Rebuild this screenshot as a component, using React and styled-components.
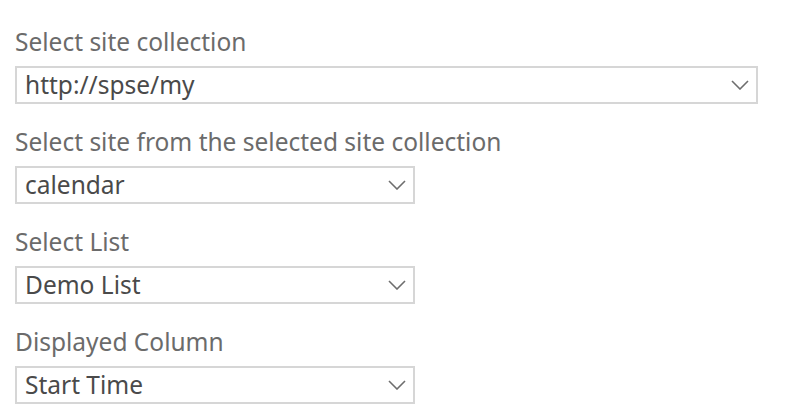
import React from 'react';
import styled, { createGlobalStyle } from 'styled-components';

const GlobalStyle = createGlobalStyle`
  html, body {
    margin: 0;
    padding: 0;
    background: #ffffff;
  }
  body {
    font-family: "Noto Sans", "Open Sans", "DejaVu Sans", sans-serif;
  }
`;

const Form = styled.div`
  display: flex;
  flex-direction: column;
  gap: 24px;
  padding: 28px 0 0 15px;
`;

const Field = styled.div`
  display: flex;
  flex-direction: column;
  gap: 10px;
`;

const Label = styled.label`
  height: 28px;
  line-height: 28px;
  font-size: 24.5px;
  color: #6b6b6b;
  white-space: nowrap;
`;

const SelectBox = styled.div`
  box-sizing: border-box;
  width: ${props => props.$width}px;
  height: 38px;
  border: 2px solid #d6d6d6;
  display: flex;
  align-items: center;
  justify-content: space-between;
  padding: 0 7px 0 8px;
  cursor: pointer;
`;

const Value = styled.span`
  font-size: 24.5px;
  line-height: 28px;
  color: #4a4a4a;
  white-space: nowrap;
`;

const Chevron = () => (
  <svg width="18" height="10" viewBox="0 0 18 10">
    <polyline
      points="1,1 9,9 17,1"
      fill="none"
      stroke="#6e6e6e"
      strokeWidth="1.6"
    />
  </svg>
);

const fields = [
  { label: 'Select site collection', value: 'http://spse/my', width: 743 },
  { label: 'Select site from the selected site collection', value: 'calendar', width: 400 },
  { label: 'Select List', value: 'Demo List', width: 400 },
  { label: 'Displayed Column', value: 'Start Time', width: 400 },
];

function App() {
  return (
    <>
      <GlobalStyle />
      <Form>
        {fields.map(f => (
          <Field key={f.label}>
            <Label>{f.label}</Label>
            <SelectBox $width={f.width}>
              <Value>{f.value}</Value>
              <Chevron />
            </SelectBox>
          </Field>
        ))}
      </Form>
    </>
  );
}

export default App;
